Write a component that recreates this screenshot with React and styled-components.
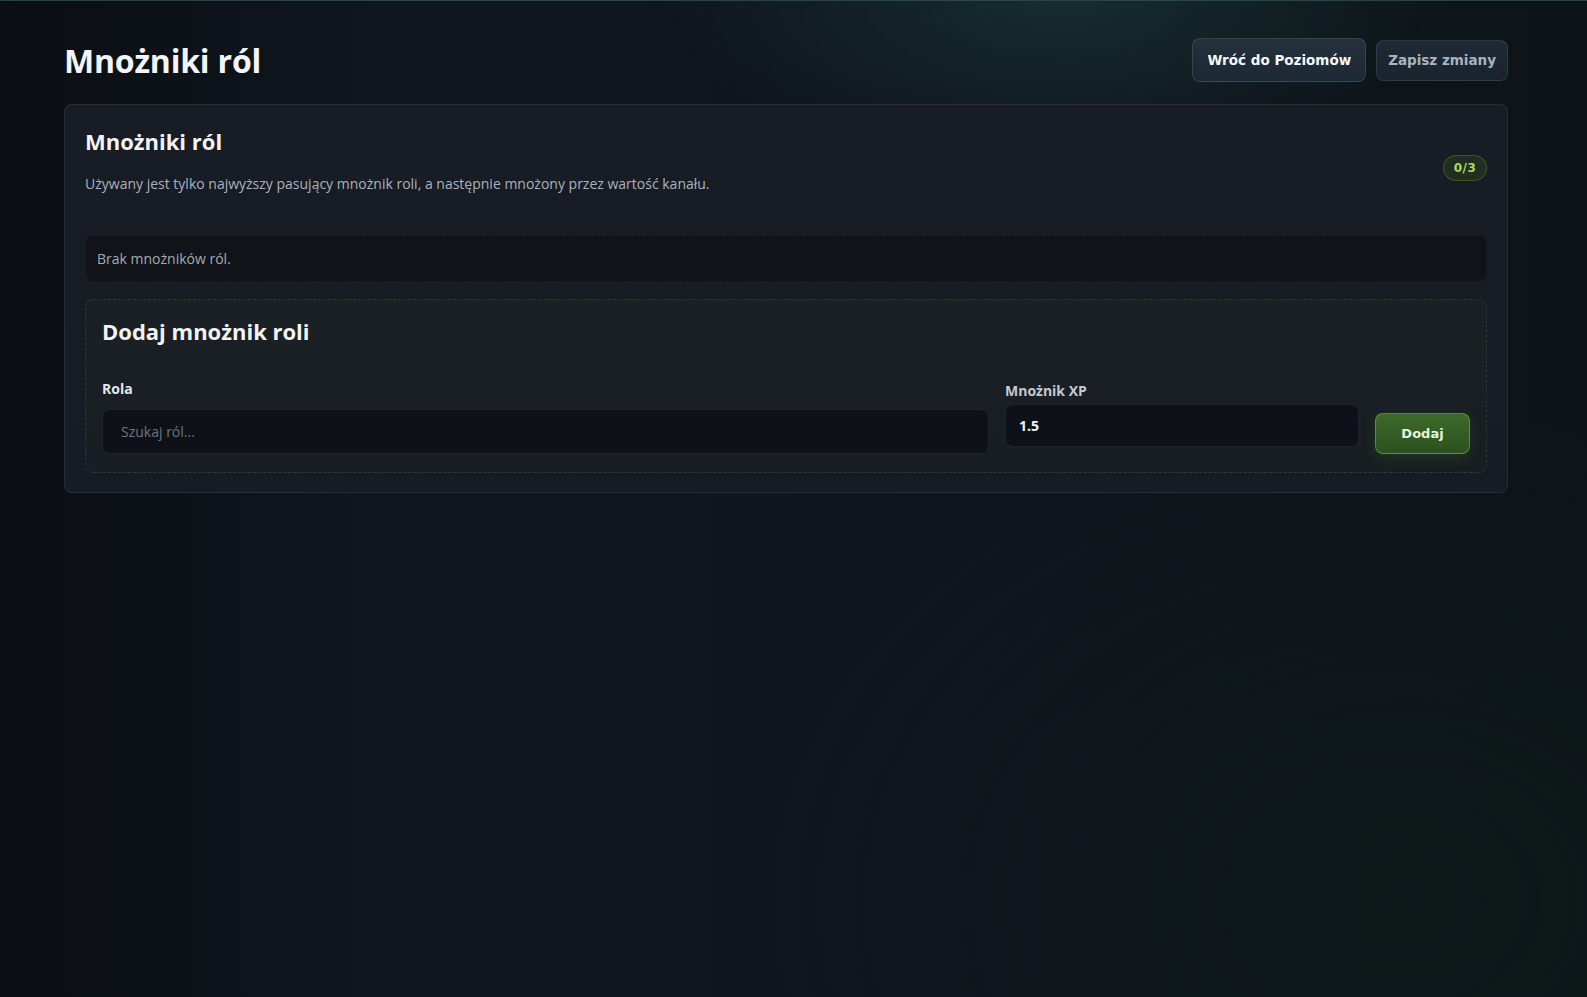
import styled, { createGlobalStyle } from "styled-components";

const GlobalStyle = createGlobalStyle`
  html {
    color-scheme: dark;
  }

  body {
    margin: 0;
    background: #0e131a;
    font-family: "Open Sans", "Noto Sans", sans-serif;
    color: #e8ecf1;
  }

  * {
    box-sizing: border-box;
  }
`;

const Page = styled.div`
  min-height: 100vh;
  padding: 37px 79px 40px 64px;
  border-top: 1px solid rgba(70, 130, 125, 0.45);
  background:
    radial-gradient(ellipse 560px 230px at 1060px 0px, rgba(34, 84, 76, 0.38), transparent 70%),
    radial-gradient(ellipse 900px 700px at 1400px 900px, rgba(14, 28, 26, 0.55), transparent 70%),
    linear-gradient(90deg, #0b0f14 0%, #10161f 25%, #0f151d 60%, #0d1418 100%);
`;

const Header = styled.header`
  display: flex;
  align-items: center;
  justify-content: space-between;
  height: 44px;
  margin-bottom: 22px;
`;

const PageTitle = styled.h1`
  margin: 0;
  font-size: 32px;
  font-weight: 700;
  letter-spacing: -0.2px;
  color: #f3f5f8;
`;

const Actions = styled.div`
  display: flex;
  align-items: center;
  gap: 10px;
`;

const ActionButton = styled.button`
  height: ${({ $primary }) => ($primary ? "44px" : "41px")};
  padding: 0 ${({ $primary }) => ($primary ? "14px" : "11px")};
  border-radius: 8px;
  border: 1px solid rgba(140, 165, 185, ${({ $primary }) => ($primary ? 0.2 : 0.16)});
  background: ${({ $primary }) =>
    $primary
      ? "linear-gradient(180deg, #24323e 0%, #1c2833 100%)"
      : "linear-gradient(180deg, #1f2a35 0%, #19232d 100%)"};
  color: ${({ $primary }) => ($primary ? "#f7f9fb" : "#a9b3bf")};
  font-family: "DejaVu Sans", Verdana, sans-serif;
  font-size: 13.5px;
  font-weight: 700;
  cursor: pointer;
`;

const Card = styled.section`
  border: 1px solid rgba(150, 170, 195, 0.12);
  border-radius: 8px;
  background: linear-gradient(180deg, #171c25 0%, #161b24 100%);
  padding: 22px 20px 19px;
`;

const CardHead = styled.div`
  display: flex;
  align-items: center;
  justify-content: space-between;
  margin-bottom: 41px;
`;

const SectionTitle = styled.h2`
  margin: 0;
  font-size: 22px;
  line-height: 1.3;
  font-weight: 700;
  color: #f1f3f6;
`;

const Description = styled.p`
  margin: 18px 0 0;
  font-size: 14px;
  line-height: 20px;
  color: #aab2bd;
`;

const Badge = styled.span`
  display: inline-flex;
  align-items: center;
  justify-content: center;
  width: 44px;
  height: 26px;
  margin-top: 16px;
  border-radius: 13px;
  border: 1px solid rgba(110, 160, 40, 0.35);
  background: rgba(80, 120, 20, 0.2);
  color: #a8dc5c;
  font-family: "DejaVu Sans", Verdana, sans-serif;
  font-size: 12px;
  font-weight: 700;
  letter-spacing: 0.5px;
`;

const EmptyBox = styled.div`
  height: 47px;
  display: flex;
  align-items: center;
  padding: 0 11px;
  border: 1px dashed rgba(150, 160, 175, 0.09);
  border-radius: 8px;
  background: #111318;
  font-size: 14px;
  color: #a4abb5;
  margin-bottom: 17px;
`;

const AddBox = styled.div`
  border: 1px dashed rgba(120, 150, 90, 0.22);
  border-radius: 8px;
  background: linear-gradient(180deg, #1a2024 0%, #181e23 100%);
  padding: 17px 16px 18px;
`;

const FormRow = styled.div`
  display: grid;
  grid-template-columns: 1fr 354px 95px;
  column-gap: 16px;
  align-items: end;
  margin-top: 34px;
`;

const Field = styled.label`
  display: flex;
  flex-direction: column;
  gap: ${({ $gap }) => $gap || "10px"};
  padding-bottom: ${({ $lift }) => $lift || "0"};
`;

const FieldLabel = styled.span`
  font-size: 14px;
  line-height: 20px;
  font-weight: 700;
  color: ${({ $muted }) => ($muted ? "#c3cad3" : "#e3e7ec")};
`;

const Input = styled.input`
  height: ${({ $h }) => $h || "45px"};
  width: 100%;
  padding: 0 ${({ $pad }) => $pad || "18px"};
  border-radius: 8px;
  border: 1px solid rgba(150, 165, 185, 0.12);
  background: #0e1218;
  font-family: "Open Sans", "Noto Sans", sans-serif;
  font-size: 14px;
  font-weight: ${({ $bold }) => ($bold ? 700 : 400)};
  color: #f1f4f7;
  outline: none;

  &::placeholder {
    color: #6c7481;
  }
`;

const AddButton = styled.button`
  height: 41px;
  border-radius: 8px;
  border: 1px solid rgba(120, 180, 80, 0.55);
  background: linear-gradient(180deg, #3c6a2a 0%, #2d5120 100%);
  box-shadow: 0 4px 14px rgba(60, 120, 30, 0.25);
  color: #e6f4d8;
  font-family: "DejaVu Sans", Verdana, sans-serif;
  font-size: 13px;
  font-weight: 700;
  cursor: pointer;
`;

export default function App() {
  return (
    <>
      <GlobalStyle />
      <Page>
        <Header>
          <PageTitle>Mnożniki ról</PageTitle>
          <Actions>
            <ActionButton $primary>Wróć do Poziomów</ActionButton>
            <ActionButton>Zapisz zmiany</ActionButton>
          </Actions>
        </Header>

        <Card>
          <CardHead>
            <div>
              <SectionTitle>Mnożniki ról</SectionTitle>
              <Description>
                Używany jest tylko najwyższy pasujący mnożnik roli, a następnie
                mnożony przez wartość kanału.
              </Description>
            </div>
            <Badge>0/3</Badge>
          </CardHead>

          <EmptyBox>Brak mnożników ról.</EmptyBox>

          <AddBox>
            <SectionTitle>Dodaj mnożnik roli</SectionTitle>
            <FormRow>
              <Field>
                <FieldLabel>Rola</FieldLabel>
                <Input placeholder="Szukaj ról..." />
              </Field>
              <Field $gap="3px" $lift="7px">
                <FieldLabel $muted>Mnożnik XP</FieldLabel>
                <Input $h="43px" $pad="13px" $bold defaultValue="1.5" />
              </Field>
              <AddButton>Dodaj</AddButton>
            </FormRow>
          </AddBox>
        </Card>
      </Page>
    </>
  );
}
